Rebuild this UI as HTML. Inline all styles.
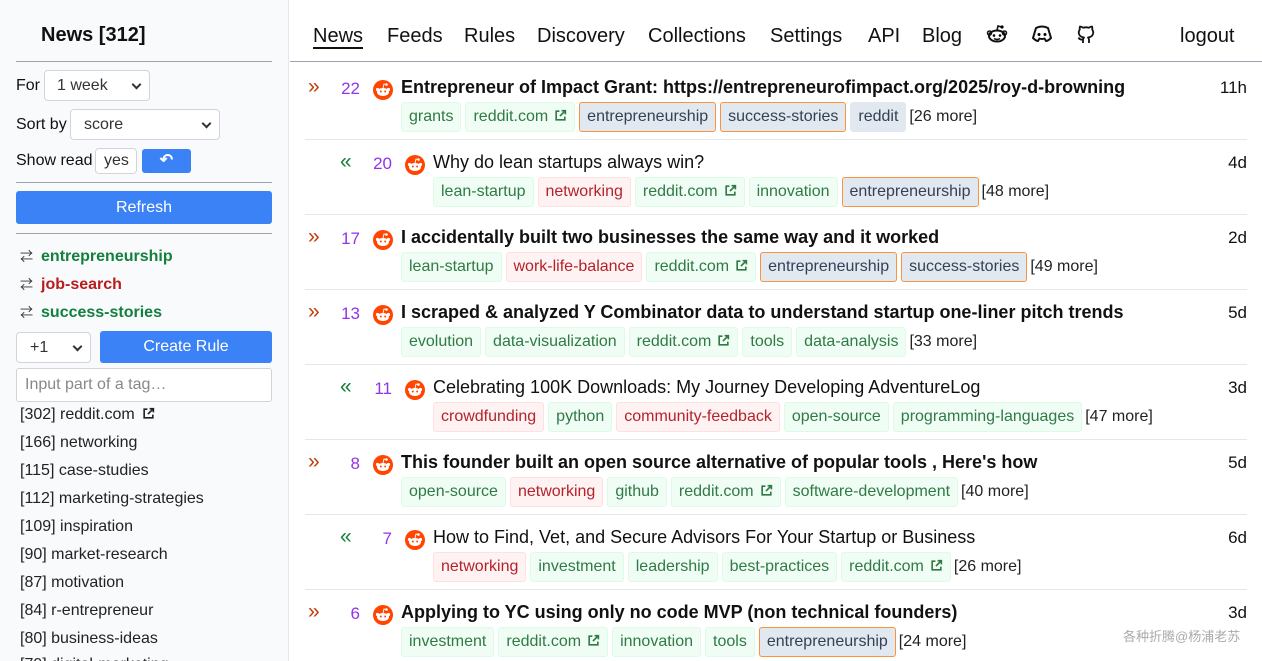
<!DOCTYPE html>
<html style="width:1262px;height:661px;overflow:hidden"><head><meta charset="utf-8">
<style>
*{box-sizing:border-box;margin:0;padding:0}
body{width:1262px;height:661px;overflow:hidden;font-family:"Liberation Sans","Noto Sans CJK SC",sans-serif;color:#111;background:#fff;position:relative;font-size:16px}
.side{position:absolute;left:0;top:0;width:289px;height:661px;background:#f8fafc;border-right:1px solid #e5e7eb;overflow:hidden}
.abs{position:absolute}
.hr{position:absolute;left:16px;width:256px;height:1px;background:#9ca3af}
.sel{position:absolute;background:#fff;border:1px solid #d1d5db;border-radius:4px;font-size:16px;color:#333;padding-left:12px;line-height:29px}
.sel.dd:after{content:"";position:absolute;right:9px;top:10px;width:5px;height:5px;border-right:2px solid #333;border-bottom:2px solid #333;transform:rotate(45deg)}
.btn{position:absolute;background:#3b82f6;color:#fff;border-radius:3px;text-align:center;font-size:16px}
.rule{position:absolute;left:20px;font-weight:bold;font-size:16px}
.rule span{color:#333;font-weight:normal;font-size:13px;margin-right:8px}
.g{color:#15803d}.r{color:#b91c1c}
.tl{position:absolute;left:20px;font-size:16px;color:#222}
.nav{position:absolute;top:25px;font-size:20px;color:#111}
.row{position:absolute;left:305px;width:942px;height:75px;border-bottom:1px solid #e5e7eb}
.arr{position:absolute;top:12px;font-size:21px;line-height:20px}
.num{position:absolute;top:14px;width:40px;text-align:right;color:#9333ea;font-size:17px}
.ico{position:absolute;top:15px}
.title{position:absolute;top:12px;font-size:18px;white-space:nowrap}
.time{position:absolute;right:0;top:13px;font-size:17px}
.tags{position:absolute;top:37px;white-space:nowrap;font-size:16px;display:flex;gap:4px;align-items:center}
.t{display:inline-block;height:30px;line-height:28px;padding:0 7px;border:1px solid;border-radius:3px}
.tg{background:#f0fdf4;border-color:#dcfce7;color:#2f7a45}
.tr{background:#fef2f2;border-color:#fee2e2;color:#b4232a}
.to{background:#e2e8f0;border-color:#fb923c;color:#334155}
.ts{background:#e2e8f0;border-color:#e2e8f0;color:#334155}
.more{color:#222;margin-left:-1px}
.ext{display:inline-block;width:13px;height:13px;vertical-align:-1px;margin-left:6px}
</style></head><body>
<svg width="0" height="0" style="position:absolute"><defs>
<symbol id="rd" viewBox="0 0 20 20"><circle cx="10" cy="10" r="10" fill="#ff4500"/><ellipse cx="10" cy="12" rx="6" ry="4" fill="#fff"/><circle cx="4.5" cy="9.5" r="1.6" fill="#fff"/><circle cx="15.5" cy="9.5" r="1.6" fill="#fff"/><circle cx="13.5" cy="4.5" r="1.3" fill="#fff"/><path d="M10 8 L11 4 L13.5 4.5" stroke="#fff" stroke-width="0.9" fill="none"/><circle cx="7.8" cy="11.5" r="1" fill="#ff4500"/><circle cx="12.2" cy="11.5" r="1" fill="#ff4500"/></symbol>
<symbol id="ex" viewBox="0 0 12 12"><path d="M5 2H2v8h8V7M7 1.5h3.5V5M10.5 1.5L5.5 6.5" stroke="currentColor" stroke-width="1.5" fill="none"/></symbol>
</defs></svg>

<div class="side">
<div class="abs" style="left:41px;top:24px;font-size:20px;font-weight:bold">News [312]</div>
<div class="hr" style="top:61px"></div>
<div class="abs" style="left:16px;top:77px">For</div>
<div class="sel dd" style="left:44px;top:70px;width:106px;height:31px">1 week</div>
<div class="abs" style="left:16px;top:116px">Sort by</div>
<div class="sel dd" style="left:70px;top:109px;width:150px;height:31px;padding-left:13px">score</div>
<div class="abs" style="left:16px;top:152px">Show read</div>
<div class="sel" style="left:95px;top:148px;width:42px;height:26px;line-height:24px;padding-left:8px">yes</div>
<div class="btn" style="left:142px;top:149px;width:49px;height:24px;line-height:24px;font-weight:bold">↶</div>
<div class="hr" style="top:182px"></div>
<div class="btn" style="left:16px;top:191px;width:256px;height:33px;line-height:33px">Refresh</div>
<div class="hr" style="top:233px"></div>
<div class="rule g" style="top:246px"><span>⇄</span>entrepreneurship</div>
<div class="rule r" style="top:274px"><span>⇄</span>job-search</div>
<div class="rule g" style="top:302px"><span>⇄</span>success-stories</div>
<div class="sel dd" style="left:16px;top:332px;width:75px;height:31px;padding-left:13px">+1</div>
<div class="btn" style="left:100px;top:331px;width:172px;height:32px;line-height:32px">Create Rule</div>
<div class="abs" style="left:16px;top:368px;width:256px;height:34px;background:#fff;border:1px solid #d1d5db;border-radius:3px;color:#888;padding-left:8px;line-height:32px">Input part of a tag…</div>
<div class="tl" style="top:406px">[302] reddit.com <svg class="ext" style="color:#222;margin-left:3px"><use href="#ex"/></svg></div>
<div class="tl" style="top:434px">[166] networking</div>
<div class="tl" style="top:462px">[115] case-studies</div>
<div class="tl" style="top:490px">[112] marketing-strategies</div>
<div class="tl" style="top:518px">[109] inspiration</div>
<div class="tl" style="top:546px">[90] market-research</div>
<div class="tl" style="top:574px">[87] motivation</div>
<div class="tl" style="top:602px">[84] r-entrepreneur</div>
<div class="tl" style="top:630px">[80] business-ideas</div>
<div class="tl" style="top:656px">[79] digital-marketing</div>
</div>

<div class="abs" style="left:290px;top:61px;width:972px;height:1px;background:#9ca3af"></div>
<div class="nav" style="left:313px;text-decoration:underline;text-underline-offset:5px">News</div>
<div class="nav" style="left:387px">Feeds</div>
<div class="nav" style="left:464px">Rules</div>
<div class="nav" style="left:537px">Discovery</div>
<div class="nav" style="left:648px">Collections</div>
<div class="nav" style="left:770px">Settings</div>
<div class="nav" style="left:868px">API</div>
<div class="nav" style="left:922px">Blog</div>
<svg class="abs" style="left:986px;top:24px" width="22" height="20" viewBox="0 0 22 20"><ellipse cx="11" cy="12" rx="8" ry="5.5" fill="none" stroke="#111" stroke-width="2"/><circle cx="8" cy="11.5" r="1.3"/><circle cx="14" cy="11.5" r="1.3"/><path d="M8 14.5q3 2 6 0M11 6.5L12 2l3.5 1" fill="none" stroke="#111" stroke-width="1.6"/><circle cx="16" cy="3" r="1.6"/><circle cx="3.5" cy="9" r="2" fill="none" stroke="#111" stroke-width="1.5"/><circle cx="18.5" cy="9" r="2" fill="none" stroke="#111" stroke-width="1.5"/></svg>
<svg class="abs" style="left:1031px;top:25px" width="22" height="18" viewBox="0 0 22 18"><path d="M5 3q6-3 12 0l3 10q-3 3-5 3l-1.5-2.5q-2.5 1-5 0L7 16q-2 0-5-3z" fill="none" stroke="#111" stroke-width="2" stroke-linejoin="round"/><circle cx="8" cy="9.5" r="1.5"/><circle cx="14" cy="9.5" r="1.5"/></svg>
<svg class="abs" style="left:1076px;top:24px" width="20" height="20" viewBox="0 0 20 20"><path d="M7 19v-3.5q-3.5.5-4.5-2M13 19v-3q0-1.5-1-2.5 4-.5 5-3.5.7-2.5-.8-4.5.4-1.5-.2-3-1.5 0-3 1.2-3-.8-6 0Q5.5 2.5 4 2.5q-.6 1.5-.2 3Q2.3 7.5 3 10q1 3 5 3.5-1 1-1 2.5" fill="none" stroke="#111" stroke-width="1.8" stroke-linejoin="round"/></svg>
<div class="nav" style="left:1180px">logout</div>

<div class="row" style="top:65px">
<div class="arr" style="left:3px;color:#c2410c">»</div><div class="num" style="left:15px">22</div>
<svg class="ico" style="left:68px" width="20" height="20"><use href="#rd"/></svg>
<div class="title" style="left:96px;font-weight:bold">Entrepreneur of Impact Grant: https://entrepreneurofimpact.org/2025/roy-d-browning</div>
<div class="time">11h</div>
<div class="tags" style="left:96px"><span class="t tg">grants</span><span class="t tg">reddit.com<svg class="ext"><use href="#ex"/></svg></span><span class="t to">entrepreneurship</span><span class="t to">success-stories</span><span class="t ts">reddit</span><span class="more">[26 more]</span></div>
</div>
<div class="row" style="top:140px">
<div class="arr" style="left:35px;color:#15803d">«</div><div class="num" style="left:47px">20</div>
<svg class="ico" style="left:100px" width="20" height="20"><use href="#rd"/></svg>
<div class="title" style="left:128px">Why do lean startups always win?</div>
<div class="time">4d</div>
<div class="tags" style="left:128px"><span class="t tg">lean-startup</span><span class="t tr">networking</span><span class="t tg">reddit.com<svg class="ext"><use href="#ex"/></svg></span><span class="t tg">innovation</span><span class="t to">entrepreneurship</span><span class="more">[48 more]</span></div>
</div>
<div class="row" style="top:215px">
<div class="arr" style="left:3px;color:#c2410c">»</div><div class="num" style="left:15px">17</div>
<svg class="ico" style="left:68px" width="20" height="20"><use href="#rd"/></svg>
<div class="title" style="left:96px;font-weight:bold">I accidentally built two businesses the same way and it worked</div>
<div class="time">2d</div>
<div class="tags" style="left:96px"><span class="t tg">lean-startup</span><span class="t tr">work-life-balance</span><span class="t tg">reddit.com<svg class="ext"><use href="#ex"/></svg></span><span class="t to">entrepreneurship</span><span class="t to">success-stories</span><span class="more">[49 more]</span></div>
</div>
<div class="row" style="top:290px">
<div class="arr" style="left:3px;color:#c2410c">»</div><div class="num" style="left:15px">13</div>
<svg class="ico" style="left:68px" width="20" height="20"><use href="#rd"/></svg>
<div class="title" style="left:96px;font-weight:bold">I scraped &amp; analyzed Y Combinator data to understand startup one-liner pitch trends</div>
<div class="time">5d</div>
<div class="tags" style="left:96px"><span class="t tg">evolution</span><span class="t tg">data-visualization</span><span class="t tg">reddit.com<svg class="ext"><use href="#ex"/></svg></span><span class="t tg">tools</span><span class="t tg">data-analysis</span><span class="more">[33 more]</span></div>
</div>
<div class="row" style="top:365px">
<div class="arr" style="left:35px;color:#15803d">«</div><div class="num" style="left:47px">11</div>
<svg class="ico" style="left:100px" width="20" height="20"><use href="#rd"/></svg>
<div class="title" style="left:128px">Celebrating 100K Downloads: My Journey Developing AdventureLog</div>
<div class="time">3d</div>
<div class="tags" style="left:128px"><span class="t tr">crowdfunding</span><span class="t tg">python</span><span class="t tr">community-feedback</span><span class="t tg">open-source</span><span class="t tg">programming-languages</span><span class="more">[47 more]</span></div>
</div>
<div class="row" style="top:440px">
<div class="arr" style="left:3px;color:#c2410c">»</div><div class="num" style="left:15px">8</div>
<svg class="ico" style="left:68px" width="20" height="20"><use href="#rd"/></svg>
<div class="title" style="left:96px;font-weight:bold">This founder built an open source alternative of popular tools , Here's how</div>
<div class="time">5d</div>
<div class="tags" style="left:96px"><span class="t tg">open-source</span><span class="t tr">networking</span><span class="t tg">github</span><span class="t tg">reddit.com<svg class="ext"><use href="#ex"/></svg></span><span class="t tg">software-development</span><span class="more">[40 more]</span></div>
</div>
<div class="row" style="top:515px">
<div class="arr" style="left:35px;color:#15803d">«</div><div class="num" style="left:47px">7</div>
<svg class="ico" style="left:100px" width="20" height="20"><use href="#rd"/></svg>
<div class="title" style="left:128px">How to Find, Vet, and Secure Advisors For Your Startup or Business</div>
<div class="time">6d</div>
<div class="tags" style="left:128px"><span class="t tr">networking</span><span class="t tg">investment</span><span class="t tg">leadership</span><span class="t tg">best-practices</span><span class="t tg">reddit.com<svg class="ext"><use href="#ex"/></svg></span><span class="more">[26 more]</span></div>
</div>
<div class="row" style="top:590px">
<div class="arr" style="left:3px;color:#c2410c">»</div><div class="num" style="left:15px">6</div>
<svg class="ico" style="left:68px" width="20" height="20"><use href="#rd"/></svg>
<div class="title" style="left:96px;font-weight:bold">Applying to YC using only no code MVP (non technical founders)</div>
<div class="time">3d</div>
<div class="tags" style="left:96px"><span class="t tg">investment</span><span class="t tg">reddit.com<svg class="ext"><use href="#ex"/></svg></span><span class="t tg">innovation</span><span class="t tg">tools</span><span class="t to">entrepreneurship</span><span class="more">[24 more]</span></div>
</div>
<div class="abs" style="left:1123px;top:626px;font-size:13px;color:#aaa">各种折腾@杨浦老苏</div>
</body></html>
